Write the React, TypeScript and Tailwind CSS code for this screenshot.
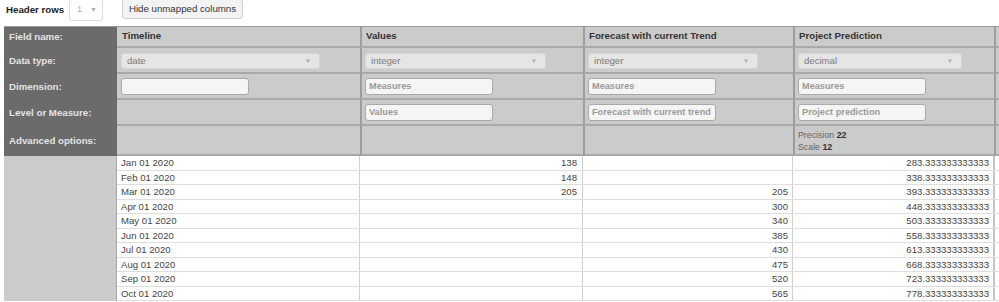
import React from "react";

const cols = [
  { w: "w-[243px]", sel: "w-[199px]", first: true },
  { w: "w-[223px]", sel: "w-[181px]" },
  { w: "w-[210px]", sel: "w-[170px]" },
  { w: "w-[201px]", sel: "w-[164px]" },
];

const names = ["Timeline", "Values", "Forecast with current Trend", "Project Prediction"];
const types = ["date", "integer", "integer", "decimal"];
const dims = ["", "Measures", "Measures", "Measures"];
const levels = [null, "Values", "Forecast with current trend", "Project prediction"];

const rows: [string, string, string, string][] = [
  ["Jan 01 2020", "138", "", "283.333333333333"],
  ["Feb 01 2020", "148", "", "338.333333333333"],
  ["Mar 01 2020", "205", "205", "393.333333333333"],
  ["Apr 01 2020", "", "300", "448.333333333333"],
  ["May 01 2020", "", "340", "503.333333333333"],
  ["Jun 01 2020", "", "385", "558.333333333333"],
  ["Jul 01 2020", "", "430", "613.333333333333"],
  ["Aug 01 2020", "", "475", "668.333333333333"],
  ["Sep 01 2020", "", "520", "723.333333333333"],
  ["Oct 01 2020", "", "565", "778.333333333333"],
];

function Cell({ i, h, children, className = "" }: { i: number; h: string; children?: React.ReactNode; className?: string }) {
  const c = cols[i];
  return (
    <div
      className={`${c.w} ${h} shrink-0 flex items-center border-b-2 border-b-[#a9a9a9] bg-[#cbcbcb] ${
        c.first ? "pl-[4px]" : "border-l-2 border-l-[#9d9d9d] pl-[3px]"
      } ${className}`}
    >
      {children}
    </div>
  );
}

function Extra({ h }: { h: string }) {
  return <div className={`${h} flex-1 border-l-2 border-l-[#9d9d9d] border-b-2 border-b-[#a9a9a9] bg-[#cbcbcb]`} />;
}

function Label({ h, children }: { h: string; children: React.ReactNode }) {
  return (
    <div className={`w-[113px] ${h} shrink-0 flex items-center pl-[5px] bg-[#6b6b6b] text-[#e4e4e4] font-bold text-[9.7px]`}>
      {children}
    </div>
  );
}

export default function App() {
  return (
    <div
      className="w-[999px] h-[302px] overflow-hidden bg-white text-[#333]"
      style={{ fontFamily: '"Liberation Sans", Arial, sans-serif' }}
    >
      {/* top controls */}
      <div className="h-[26px] flex items-start">
        <div className="w-[69px] pl-[6px] pt-[4px] text-[9.7px] font-bold leading-[12px] text-[#222]">Header rows</div>
        <div className="w-[34px] h-[22px] -mt-[1px] border border-[#dcdcdc] rounded-[3px] bg-white flex items-center justify-between pl-[7px] pr-[5px] text-[9px] text-[#aaa]">
          <span>1</span>
          <span className="text-[7px]">▼</span>
        </div>
        <div className="ml-[19px] w-[121px] h-[20px] -mt-[1px] border border-[#cfcfcf] rounded-[3px] bg-[#f3f3f3] flex items-center justify-center text-[9.7px] text-[#333]">
          Hide unmapped columns
        </div>
      </div>

      {/* table */}
      <div className="ml-[4px] border-t border-t-[#9a9a9a]">
        {/* Field name */}
        <div className="flex">
          <Label h="h-[21px]">Field name:</Label>
          {names.map((n, i) => (
            <Cell key={i} i={i} h="h-[21px]" className="font-bold text-[9.7px] text-[#333]">
              <span className="pl-[1px]">{n}</span>
            </Cell>
          ))}
          <Extra h="h-[21px]" />
        </div>
        {/* Data type */}
        <div className="flex">
          <Label h="h-[26px]">Data type:</Label>
          {types.map((t, i) => (
            <Cell key={i} i={i} h="h-[26px]">
              <div
                className={`${cols[i].sel} h-[16px] mt-[2px] bg-[#e5e5e5] border border-[#d6d6d6] rounded-[3px] flex items-center justify-between pl-[5px] pr-[8px] text-[9.6px] text-[#7a7a7a]`}
              >
                <span>{t}</span>
                <span className="text-[6px] text-[#aaa]">▼</span>
              </div>
            </Cell>
          ))}
          <Extra h="h-[26px]" />
        </div>
        {/* Dimension */}
        <div className="flex">
          <Label h="h-[26px]">Dimension:</Label>
          {dims.map((d, i) => (
            <Cell key={i} i={i} h="h-[26px]">
              <div className="w-[128px] h-[17px] mt-[1px] bg-[#f5f5f5] border border-[#a9a9a9] rounded-[3px] flex items-center pl-[3px] text-[9.2px] font-bold text-[#9a9a9a]">
                {d}
              </div>
            </Cell>
          ))}
          <Extra h="h-[26px]" />
        </div>
        {/* Level or Measure */}
        <div className="flex">
          <Label h="h-[26px]">Level or Measure:</Label>
          {levels.map((d, i) => (
            <Cell key={i} i={i} h="h-[26px]">
              {d !== null && (
                <div className="w-[128px] h-[17px] mt-[1px] bg-[#f5f5f5] border border-[#a9a9a9] rounded-[3px] flex items-center pl-[3px] pr-[3px] text-[9.2px] font-bold text-[#9a9a9a] overflow-hidden whitespace-nowrap">
                  <span className="overflow-hidden">{d}</span>
                </div>
              )}
            </Cell>
          ))}
          <Extra h="h-[26px]" />
        </div>
        {/* Advanced */}
        <div className="flex">
          <Label h="h-[30px]">Advanced options:</Label>
          {[0, 1, 2, 3].map((i) => (
            <Cell key={i} i={i} h="h-[30px]" className="border-b-[#9a9a9a]">
              {i === 3 && (
                <div className="flex flex-col text-[8.8px] leading-[12px] text-[#666] pt-[1px]">
                  <span>
                    Precision <b className="text-[#333]">22</b>
                  </span>
                  <span>
                    Scale <b className="text-[#333]">12</b>
                  </span>
                </div>
              )}
            </Cell>
          ))}
          <Extra h="h-[30px]" />
        </div>

        {/* data */}
        <div className="flex">
          <div className="w-[113px] shrink-0 bg-[#cbcbcb] border-r border-r-[#a5a5a5]" />
          <div className="flex-1 flex flex-col">
            {rows.map((r, ri) => (
              <div key={ri} className="flex h-[14.5px] border-b border-b-[#dedede] text-[9.6px] leading-[13px] text-[#444]">
                <div className="w-[242px] shrink-0 pl-[4px] flex items-center">{r[0]}</div>
                <div className="w-[223px] shrink-0 border-l border-l-[#d0d0d0] pr-[5px] flex items-center justify-end">{r[1]}</div>
                <div className="w-[210px] shrink-0 border-l border-l-[#d0d0d0] pr-[4px] flex items-center justify-end">{r[2]}</div>
                <div className="w-[201px] shrink-0 border-l border-l-[#d0d0d0] pr-[4px] flex items-center justify-end">{r[3]}</div>
                <div className="flex-1 border-l-2 border-l-[#c4c4c4]" />
              </div>
            ))}
          </div>
        </div>
      </div>
    </div>
  );
}
